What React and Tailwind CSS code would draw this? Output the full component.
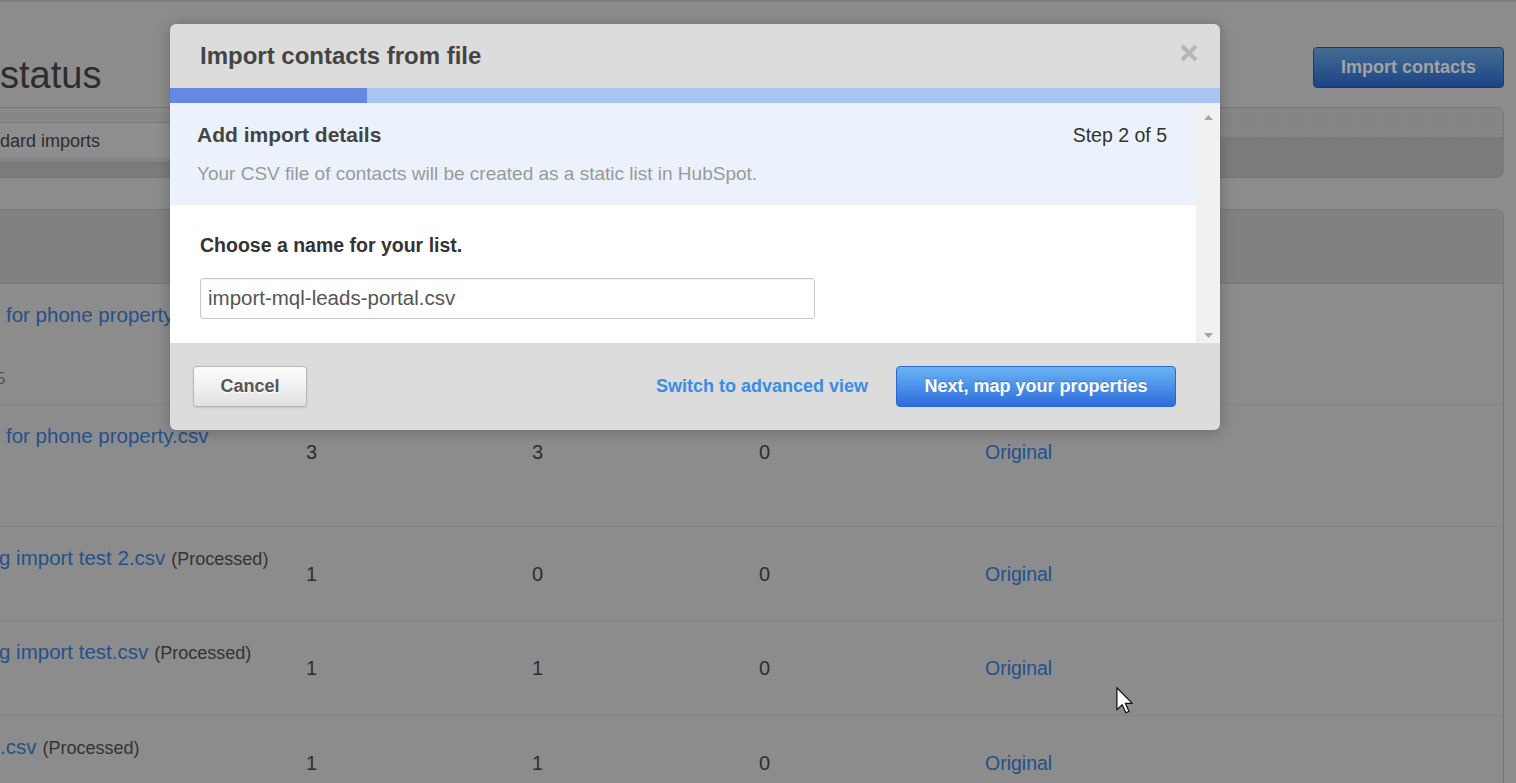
import React from 'react';

const rows = [
  { h: 'h-[121px]', name: 'for phone property.csv', indent: 'pl-[6px]', sub: '5' },
  { h: 'h-[122px]', name: 'for phone property.csv', indent: 'pl-[6px]', cells: ['3', '3', '0'] },
  { h: 'h-[94px]', name: 'g import test 2.csv', indent: '-ml-[1px]', processed: true, cells: ['1', '0', '0'] },
  { h: 'h-[95px]', name: 'g import test.csv', indent: '-ml-[1px]', processed: true, cells: ['1', '1', '0'] },
  { h: 'h-[90px]', name: '.csv', indent: '', processed: true, cells: ['1', '1', '0'] },
];

function Cursor() {
  return (
    <svg className="absolute left-[1116px] top-[687px]" width="17" height="27" viewBox="0 0 12 19.5">
      <path d="M0.5 0.5 L0.5 16.5 L4.3 12.8 L7 18.6 L9.2 17.6 L6.6 11.8 L11.6 11.8 Z" fill="#ffffff" stroke="#111" strokeWidth="0.9" strokeLinejoin="round" />
    </svg>
  );
}

function ImportModal() {
  return (
    <div className="absolute left-[170px] top-[24px] w-[1050px] overflow-hidden rounded-[6px] bg-[#dcdcdc] shadow-[0_2px_14px_rgba(0,0,0,0.25)]">
      {/* Header */}
      <div className="flex h-[64px] items-center justify-between pl-[30px] pr-[22px]">
        <h2 className="text-[24px] font-bold leading-none text-[#444]">Import contacts from file</h2>
        <svg width="18" height="18" viewBox="0 0 18 18" className="-mt-[6px]">
          <path d="M2 2 L16 16 M16 2 L2 16" stroke="#b6b6b6" strokeWidth="4" strokeLinecap="butt" />
        </svg>
      </div>

      {/* Progress */}
      <div className="flex h-[15px] bg-[#a8c5f1]">
        <div className="w-[197px] bg-[#6589e3]" />
      </div>

      {/* Body */}
      <div className="flex h-[240px]">
        <div className="flex flex-1 flex-col">
          <div className="h-[102px] bg-[#ecf2fb] px-[27px] pt-[20px]">
            <div className="flex items-center justify-between leading-[24px]">
              <span className="text-[21px] font-bold text-[#444]">Add import details</span>
              <span className="pr-[2px] text-[19.5px] text-[#333]">Step 2 of 5</span>
            </div>
            <p className="mt-[16px] text-[19px] leading-[22px] text-[#9a9a9a]">
              Your CSV file of contacts will be created as a static list in HubSpot.
            </p>
          </div>
          <div className="flex-1 bg-white pl-[30px] pt-[29px]">
            <label className="block text-[19.5px] font-bold leading-[23px] text-[#333]">Choose a name for your list.</label>
            <div className="mt-[21px] flex h-[41px] w-[615px] items-center rounded-[3px] border border-[#c8c8c8] pl-[7px] text-[20.5px] text-[#555] shadow-[inset_0_1px_2px_rgba(0,0,0,0.06)]">
              import-mql-leads-portal.csv
            </div>
          </div>
        </div>
        <div className="flex w-[24px] flex-col items-center justify-between bg-[#f1f1f1] pb-[5px] pt-[12px]">
          <svg width="9" height="5" viewBox="0 0 9 5"><path d="M0 5 L4.5 0 L9 5 Z" fill="#a5a5a5" /></svg>
          <svg width="9" height="5" viewBox="0 0 9 5"><path d="M0 0 L4.5 5 L9 0 Z" fill="#a5a5a5" /></svg>
        </div>
      </div>

      {/* Footer */}
      <div className="flex h-[87px] items-center pl-[23px] pr-[44px]">
        <button className="h-[41px] w-[114px] rounded-[4px] border border-[#b8b8b8] bg-gradient-to-b from-[#fbfbfb] via-[#f1f1f1] to-[#e0e0e0] text-[18px] font-bold text-[#555] shadow-[0_1px_2px_rgba(0,0,0,0.12)] [text-shadow:0_1px_0_#fff]">
          Cancel
        </button>
        <a className="ml-auto text-[18px] font-bold text-[#3a8de3]">Switch to advanced view</a>
        <button className="ml-[28px] h-[41px] w-[280px] rounded-[4px] border border-[#2c67cf] bg-gradient-to-b from-[#6bb3f4] to-[#2e6ddb] text-[18px] font-bold text-white [text-shadow:0_-1px_0_rgba(0,0,0,0.25)]">
          Next, map your properties
        </button>
      </div>
    </div>
  );
}

export default function App() {
  return (
    <div className="relative h-[783px] w-[1516px] overflow-hidden bg-[#8c8c8c] font-['Liberation_Sans',Arial,sans-serif]">
      <div className="h-[2px] bg-[#7c7c7c]" />

      {/* Page header */}
      <div className="flex h-[105px] items-start justify-between">
        <h1 className="pt-[51px] text-[38px] leading-[44px] text-[#2d2d2d]">status</h1>
        <button className="mr-[12px] mt-[45px] h-[41px] w-[191px] rounded-[4px] border border-[#1b3a6e] bg-gradient-to-b from-[#446c93] to-[#1c4486] text-[18px] font-bold text-[#a3a3a3]">
          Import contacts
        </button>
      </div>

      {/* Filter bar */}
      <div className="-ml-[12px] mr-[12px] flex h-[71px] overflow-hidden rounded-[8px] border border-[#777] bg-[#7b7b7b]">
        <div className="flex w-[320px] flex-col">
          <div className="h-[4px] bg-[#8b8b8b]" />
          <div className="h-[10px] bg-[#888] bg-[radial-gradient(#7e7e7e_0.8px,transparent_0.8px)] bg-[length:3px_3px]" />
          <div className="flex h-[35px] items-center border-t border-[#7a7a7a] bg-[#8e8e8e] pl-[11px] pt-[3px] text-[18px] text-[#2d2d2d]">
            dard imports
          </div>
          <div className="h-[5px] bg-[#868686]" />
          <div className="border-t border-[#747474]" />
        </div>
        <div className="flex flex-1 flex-col">
          <div className="h-[29px] bg-[#878787] bg-[radial-gradient(#7d7d7d_0.8px,transparent_0.8px)] bg-[length:3px_3px]" />
        </div>
      </div>

      {/* Imports table */}
      <div className="-ml-[12px] mr-[12px] mt-[31px] rounded-t-[8px] border border-b-0 border-[#777]">
        <div className="h-[74px] rounded-t-[8px] border-b border-[#777] bg-[#818181]" />
        {rows.map((row, i) => (
          <div
            key={i}
            className={`grid grid-cols-[306px_226px_227px_226px_1fr] border-b border-[#838383] pl-[11px] ${row.h}`}
          >
            <div className="pt-[19px] leading-[24px]">
              <div className={`whitespace-nowrap ${row.indent}`}>
                <a className="text-[20.5px] text-[#24518b]">{row.name}</a>
                {row.processed && <span className="ml-[6px] text-[18px] text-[#333]">(Processed)</span>}
              </div>
              {row.sub && <div className="-ml-[4px] mt-[38px] text-[17px] text-[#555]">{row.sub}</div>}
            </div>
            {row.cells && (
              <>
                {row.cells.map((c, j) => (
                  <div key={j} className="pt-[35px] text-[20px] leading-[24px] text-[#2e2e2e]">{c}</div>
                ))}
                <div className="pt-[35px] text-[19.5px] leading-[24px]">
                  <a className="text-[#24518b]">Original</a>
                </div>
              </>
            )}
          </div>
        ))}
      </div>

      <ImportModal />
      <Cursor />
    </div>
  );
}
